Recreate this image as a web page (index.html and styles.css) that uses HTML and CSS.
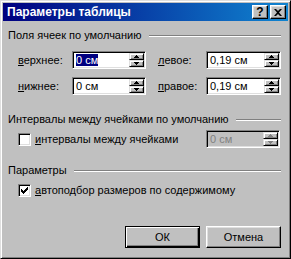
FILE: index.html
```html
<!DOCTYPE html>
<html lang="ru">
<head>
<meta charset="utf-8">
<title>Параметры таблицы</title>
<link rel="stylesheet" href="styles.css">
</head>
<body>
<div class="window">
  <div class="titlebar">
    <span class="title">Параметры таблицы</span>
    <div class="tbtns">
      <span class="tbtn help">?</span>
      <span class="tbtn close"><svg width="8" height="7" viewBox="0 0 8 7"><path d="M0 0h2l2 2 2-2h2L5 3.5 8 7H6L4 5 2 7H0l3-3.5z"/></svg></span>
    </div>
  </div>
  <div class="content">
    <div class="group-head"><span>Поля ячеек по умолчанию</span><i class="etch"></i></div>
    <div class="margins">
      <span class="lbl"><u>в</u>ерхнее:</span>
      <div class="field"><span class="val"><span class="sel">0 см</span></span><span class="arrows"><span class="arr"><svg width="5" height="3" viewBox="0 0 5 3"><path d="M2 0h1v1h1v1h1v1H0V2h1V1h1z"/></svg></span><span class="arr"><svg width="5" height="3" viewBox="0 0 5 3"><path d="M0 0h5v1H4v1H3v1H2V2H1V1H0z"/></svg></span></span></div>
      <span class="lbl lbl2"><u>л</u>евое:</span>
      <div class="field"><span class="val">0,19 см</span><span class="arrows"><span class="arr"><svg width="5" height="3" viewBox="0 0 5 3"><path d="M2 0h1v1h1v1h1v1H0V2h1V1h1z"/></svg></span><span class="arr"><svg width="5" height="3" viewBox="0 0 5 3"><path d="M0 0h5v1H4v1H3v1H2V2H1V1H0z"/></svg></span></span></div>
      <span class="lbl"><u>н</u>ижнее:</span>
      <div class="field"><span class="val">0 см</span><span class="arrows"><span class="arr"><svg width="5" height="3" viewBox="0 0 5 3"><path d="M2 0h1v1h1v1h1v1H0V2h1V1h1z"/></svg></span><span class="arr"><svg width="5" height="3" viewBox="0 0 5 3"><path d="M0 0h5v1H4v1H3v1H2V2H1V1H0z"/></svg></span></span></div>
      <span class="lbl lbl2"><u>п</u>равое:</span>
      <div class="field"><span class="val">0,19 см</span><span class="arrows"><span class="arr"><svg width="5" height="3" viewBox="0 0 5 3"><path d="M2 0h1v1h1v1h1v1H0V2h1V1h1z"/></svg></span><span class="arr"><svg width="5" height="3" viewBox="0 0 5 3"><path d="M0 0h5v1H4v1H3v1H2V2H1V1H0z"/></svg></span></span></div>
    </div>

    <div class="group-head gh2"><span>Интервалы между ячейками по умолчанию</span><i class="etch"></i></div>
    <div class="row-spacing">
      <span class="check"></span>
      <span class="clabel"><u>и</u>нтервалы между ячейками</span>
      <div class="field disabled"><span class="val">0 см</span><span class="arrows"><span class="arr"><svg width="5" height="3" viewBox="0 0 5 3"><path d="M2 0h1v1h1v1h1v1H0V2h1V1h1z"/></svg></span><span class="arr"><svg width="5" height="3" viewBox="0 0 5 3"><path d="M0 0h5v1H4v1H3v1H2V2H1V1H0z"/></svg></span></span></div>
    </div>

    <div class="group-head gh3"><span>Параметры</span><i class="etch"></i></div>
    <div class="row-auto">
      <span class="check"><svg width="7" height="7" viewBox="0 0 7 7"><path d="M0 2h1v3H0zM1 3h1v3H1zM2 4h1v3H2zM3 3h1v3H3zM4 2h1v3H4zM5 1h1v3H5zM6 0h1v3H6z"/></svg></span>
      <span class="clabel"><u>а</u>втоподбор размеров по содержимому</span>
    </div>

    <div class="buttons">
      <span class="btn default">ОК</span>
      <span class="btn">Отмена</span>
    </div>
  </div>
</div>
</body>
</html>
```
FILE: styles.css
```css
html, body {
  margin: 0;
  background: #c0c0c0;
}
body {
  font-family: "Liberation Sans", Arial, sans-serif;
  font-size: 11px;
  line-height: 13px;
  color: #000;
}
.window {
  width: 291px;
  height: 259px;
  box-sizing: border-box;
  border: 1px solid;
  border-color: #dfdfdf #000 #000 #dfdfdf;
  box-shadow: inset 1px 1px #fff, inset -1px -1px #808080;
  padding: 2px;
  display: flex;
  flex-direction: column;
  background: #c0c0c0;
}
.titlebar {
  height: 18px;
  flex: none;
  background: linear-gradient(to right, #000080, #1084d0);
  display: flex;
  align-items: center;
  justify-content: space-between;
  padding: 0 2px 0 4px;
  color: #fff;
}
.title {
  font-weight: bold;
  font-size: 12px;
}
.tbtns {
  display: flex;
  gap: 2px;
}
.tbtn {
  width: 16px;
  height: 14px;
  box-sizing: border-box;
  background: #c0c0c0;
  border: 1px solid;
  border-color: #fff #000 #000 #fff;
  box-shadow: inset -1px -1px #808080, inset 1px 1px #dfdfdf;
  display: flex;
  align-items: center;
  justify-content: center;
  color: #000;
}
.help {
  font-weight: bold;
  font-size: 12px;
  line-height: 12px;
}
.close svg {
  fill: #000;
}
.content {
  flex: 1;
  display: flex;
  flex-direction: column;
  padding: 0 7px 8px 5px;
}
.group-head {
  display: flex;
  align-items: center;
  gap: 8px;
  margin-top: 8px;
  height: 13px;
}
.gh2 {
  margin-top: 18px;
  gap: 7px;
}
.gh3 {
  margin-top: 16px;
  gap: 7px;
}
.etch {
  flex: 1;
  height: 0;
  border-top: 1px solid #808080;
  border-bottom: 1px solid #fff;
}
.margins {
  margin-top: 9px;
  margin-left: 10px;
  display: grid;
  grid-template-columns: 54px 74px 60px 75px;
  grid-auto-rows: 18px;
  row-gap: 8px;
  align-items: center;
}
.lbl2 {
  padding-left: 12px;
}
u {
  text-decoration: underline;
  text-underline-offset: 1px;
}
.field {
  height: 18px;
  box-sizing: border-box;
  display: flex;
  border: 1px solid;
  border-color: #808080 #fff #fff #808080;
  box-shadow: inset 1px 1px #000, inset -1px -1px #dfdfdf;
  background: #fff;
  padding: 1px;
}
.val {
  flex: 1;
  padding-left: 2px;
  line-height: 14px;
  white-space: nowrap;
  overflow: hidden;
}
.sel {
  background: #000080;
  color: #fff;
}
.arrows {
  width: 15px;
  display: flex;
  flex-direction: column;
}
.arr {
  height: 7px;
  box-sizing: border-box;
  background: #c0c0c0;
  border: 1px solid;
  border-color: #dfdfdf #000 #000 #dfdfdf;
  box-shadow: inset 1px 1px #fff, inset -1px -1px #808080;
  display: flex;
  align-items: center;
  justify-content: center;
}
.arr svg {
  fill: #000;
}
.disabled {
  background: #c0c0c0;
  color: #808080;
}
.disabled .arr svg {
  fill: #808080;
}
.row-spacing {
  margin-top: 4px;
  height: 18px;
  display: flex;
  align-items: center;
}
.row-spacing .field {
  margin-left: auto;
  width: 74px;
  margin-right: 1px;
}
.check {
  width: 13px;
  height: 13px;
  box-sizing: border-box;
  margin-left: 10px;
  margin-right: 4px;
  border: 1px solid;
  border-color: #808080 #fff #fff #808080;
  box-shadow: inset 1px 1px #000, inset -1px -1px #dfdfdf;
  background: #fff;
  display: flex;
  align-items: center;
  justify-content: center;
  flex: none;
}
.check svg {
  fill: #000;
}
.row-auto {
  margin-top: 7px;
  height: 13px;
  display: flex;
  align-items: center;
}
.buttons {
  margin-top: auto;
  display: flex;
  justify-content: flex-end;
  gap: 6px;
}
.btn {
  width: 75px;
  height: 22px;
  box-sizing: border-box;
  border: 1px solid;
  border-color: #fff #000 #000 #fff;
  box-shadow: inset -1px -1px #808080, inset 1px 1px #dfdfdf;
  display: flex;
  align-items: center;
  justify-content: center;
}
.btn.default {
  border-color: #000;
  box-shadow: inset 1px 1px #fff, inset -1px -1px #000, inset -2px -2px #808080;
}
```
